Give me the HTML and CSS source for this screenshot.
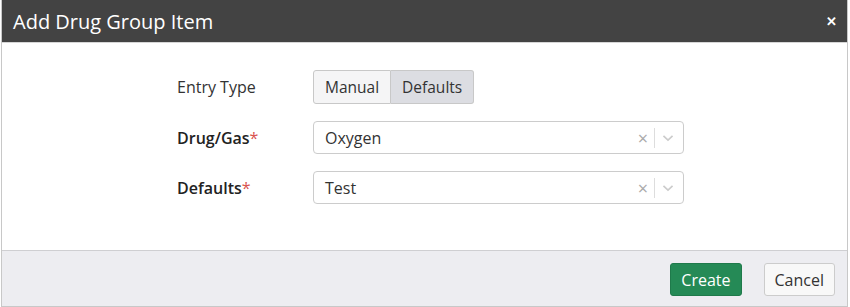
FILE: index.html
```html
<!DOCTYPE html>
<html lang="en">
  <head>
    <meta charset="UTF-8" />
    <meta name="viewport" content="width=device-width, initial-scale=1.0" />
    <title>Add Drug Group Item</title>
    <link rel="stylesheet" href="styles.css">
  </head>
  <body>
    <div class="modal">
      <div class="modal-header">
        <h2>Add Drug Group Item</h2>
        <button class="close-button">&#x2715;</button>
      </div>

      <div class="modal-body">
        <div class="form-row">
          <label>Entry Type</label>
          <div class="btn-group">
            <button class="toggle">Manual</button>
            <button class="toggle active">Defaults</button>
          </div>
        </div>

        <div class="form-row">
          <label class="required">Drug/Gas<span>*</span></label>
          <div class="select">
            <span class="select-value">Oxygen</span>
            <span class="select-clear">&times;</span>
            <span class="select-sep"></span>
            <svg class="select-arrow" width="14" height="14" viewBox="0 0 20 20">
              <path d="M3.5 7 L10 13 L16.5 7" fill="none" stroke="#ccc" stroke-width="2.4" />
            </svg>
          </div>
        </div>

        <div class="form-row">
          <label class="required">Defaults<span>*</span></label>
          <div class="select">
            <span class="select-value">Test</span>
            <span class="select-clear">&times;</span>
            <span class="select-sep"></span>
            <svg class="select-arrow" width="14" height="14" viewBox="0 0 20 20">
              <path d="M3.5 7 L10 13 L16.5 7" fill="none" stroke="#ccc" stroke-width="2.4" />
            </svg>
          </div>
        </div>
      </div>

      <div class="modal-footer">
        <button class="btn btn-success">Create</button>
        <button class="btn btn-default">Cancel</button>
      </div>
    </div>
  </body>
</html>
```

FILE: styles.css
```css
body {
  font-family: "Open Sans", sans-serif;
  margin: 0;
  background-color: white;
  color: #333;
}
.modal {
  width: 845px;
  margin-left: 1px;
  border: 1px solid #c8c8c8;
  border-top: none;
  background-color: white;
}
.modal-header {
  display: flex;
  align-items: center;
  justify-content: space-between;
  height: 42px;
  padding: 0 10px 0 11px;
  background-color: #434343;
  border-bottom: 1px solid #d6d6d6;
}
.modal-header h2 {
  margin: 0;
  font-size: 20px;
  font-weight: normal;
  color: white;
}
.close-button {
  background: none;
  border: none;
  color: white;
  font-size: 13px;
  font-weight: bold;
  padding: 0;
  cursor: pointer;
}
.modal-body {
  display: flex;
  flex-direction: column;
  gap: 17px;
  padding: 27px 0 46px 175px;
}
.form-row {
  display: flex;
  align-items: center;
}
.form-row label {
  width: 136px;
  font-size: 16px;
  color: #333;
}
.form-row label.required {
  font-weight: 600;
  color: #222;
}
.form-row label span {
  color: #d9534f;
  font-weight: normal;
}
.btn-group {
  display: flex;
}
.toggle {
  font-family: inherit;
  font-size: 15.5px;
  color: #333;
  height: 34px;
  padding: 0 11px;
  background-color: #f5f5f6;
  border: 1px solid #c8c8c8;
  cursor: pointer;
}
.toggle:first-child {
  border-radius: 3px 0 0 3px;
}
.toggle:last-child {
  border-left: none;
  border-radius: 0 3px 3px 0;
}
.toggle.active {
  background-color: #dcdde2;
}
.select {
  display: flex;
  align-items: center;
  width: 369px;
  height: 31px;
  border: 1px solid #ccc;
  border-radius: 4px;
  background-color: white;
}
.select-value {
  flex: 1;
  padding-left: 11px;
  font-size: 16px;
  color: #333;
}
.select-clear {
  color: #aaa;
  font-size: 18px;
  margin-right: 6px;
}
.select-sep {
  width: 1px;
  height: 20px;
  background-color: #ddd;
}
.select-arrow {
  margin: 0 8px 0 6px;
}
.modal-footer {
  display: flex;
  justify-content: flex-end;
  gap: 22px;
  padding: 12px 12px 10px;
  background-color: #ededf1;
  border-top: 1px solid #cfcfd2;
  border-bottom: 1px solid #c8c8c8;
}
.btn {
  font-family: inherit;
  font-size: 16px;
  height: 33px;
  padding: 0 10px;
  border-radius: 3px;
  cursor: pointer;
}
.btn-success {
  background-color: #258a56;
  border: 1px solid #1f7a4b;
  color: white;
}
.btn-default {
  background-color: #f8f8f8;
  border: 1px solid #ccc;
  color: #333;
}
```
